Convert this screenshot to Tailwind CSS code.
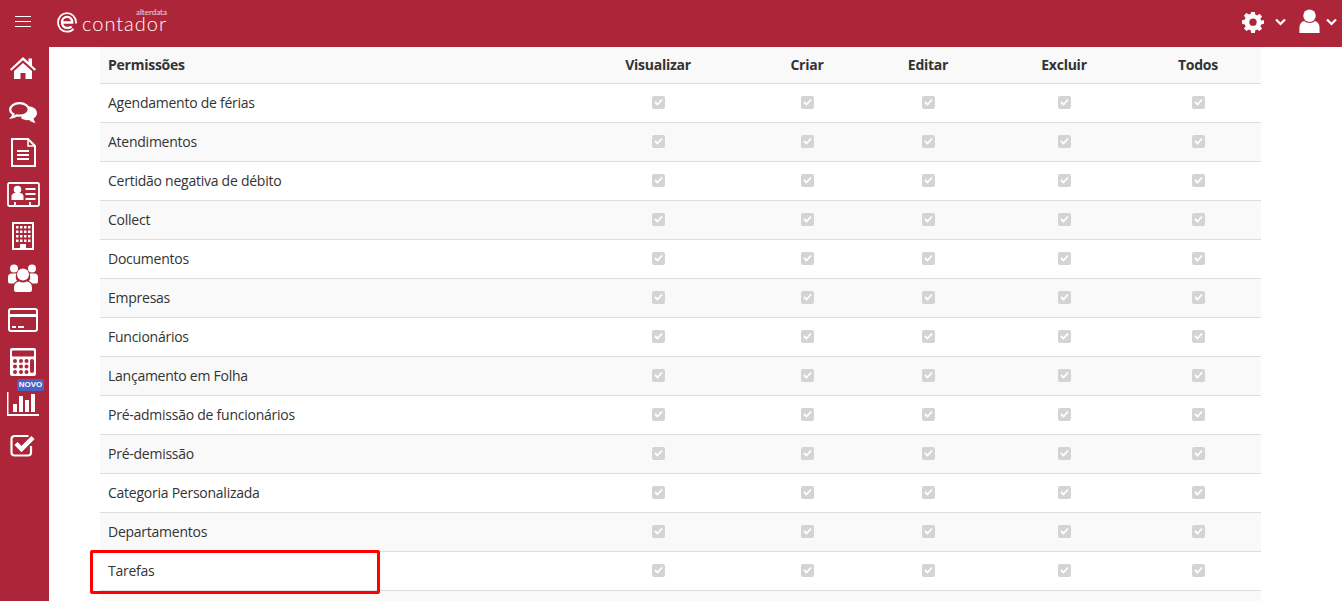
<!DOCTYPE html>
<html lang="en">
<head>
  <meta charset="UTF-8" />
  <script src="https://cdn.jsdelivr.net/npm/@tailwindcss/browser@4"></script>
  <title>eContador</title>
</head>
<body class="h-[601px] overflow-hidden bg-white font-['Open_Sans','Noto_Sans',sans-serif] text-[14px] text-[#333]">
  <!-- Top bar -->
  <header class="flex h-[47px] items-center bg-[#ac2539] text-white">
    <button class="ml-[15px] mb-[5px] flex w-[16px] flex-col gap-[4px]">
      <span class="h-px w-full bg-white"></span>
      <span class="h-px w-full bg-white"></span>
      <span class="h-px w-full bg-white"></span>
    </button>
    <div class="relative ml-[26px] mb-[9px] flex h-[30px] w-[110px] items-end">
      <svg class="mb-[1px]" width="20" height="21" viewBox="0 0 20 21" fill="none" stroke="white">
        <path stroke-width="2.4" d="M5 10.5h10.2c.2-3.2-2-5.6-5-5.6-3.100 0-5.200 2.400-5.200 5.400 0 3.200 2.200 5.600 5.400 5.600 1.800 0 3.200-.5 4.300-1.300" />
        <path stroke-width="1.800" d="M16.600 16.800C14.900 18.600 12.700 19.700 10 19.700 4.900 19.700 1 15.700 1 10.500S4.900 1.200 10 1.200c5 0 9 3.800 9 9.300v1" />
      </svg>
      <span class="absolute left-[25px] top-[12px] font-['Lato',sans-serif] text-[20px] leading-[14px] font-light tracking-[1px]">contador</span>
      <span class="absolute left-[79px] top-[5px] font-['Lato',sans-serif] text-[8px] leading-[6px] text-white/80">alterdata</span>
    </div>
    <div class="ml-auto mb-[4px] flex items-center">
      <svg width="22" height="22" viewBox="0 0 24 24" fill="white" fill-rule="evenodd">
        <path d="M10 1h4l.6 3.100 1.900.8 2.600-1.800 2.800 2.800-1.800 2.600.8 1.900L24 10v4l-3.100.6-.8 1.900 1.800 2.600-2.800 2.800-2.600-1.800-1.900.8L14 24h-4l-.6-3.100-1.900-.8-2.600 1.800-2.800-2.800 1.800-2.600-.8-1.900L0 14v-4l3.100-.6.800-1.900-1.800-2.600 2.800-2.800 2.600 1.800 1.900-.8zM12 8.200a4 4 0 1 0 0 8 4 4 0 0 0 0-8z" />
      </svg>
      <svg class="ml-[11px]" width="11" height="8" viewBox="0 0 11 8" fill="none" stroke="white" stroke-width="2.200"><path d="M1 1.500l4.500 4.500L10 1.500" /></svg>
      <svg class="ml-[13px] mb-[2px]" width="21" height="24" viewBox="0 0 21 25" fill="white">
        <circle cx="10.500" cy="7" r="6.500" />
        <path d="M5 12.500c1.500 1.500 3.500 2 5.500 2s4-.5 5.500-2c3 .8 5 3 5 7V25H0v-5.500c0-4 2-6.200 5-7z" />
      </svg>
      <svg class="ml-[6px] mr-[5px]" width="11" height="8" viewBox="0 0 11 8" fill="none" stroke="white" stroke-width="2.200"><path d="M1 1.500l4.500 4.500L10 1.500" /></svg>
    </div>
  </header>

  <div class="flex h-[554px]">
    <!-- Sidebar -->
    <aside class="relative flex w-[49px] shrink-0 flex-col bg-[#ac2539] pr-[3px] text-white">
      <div class="flex h-[41px] items-center justify-center">
        <svg width="26" height="22" viewBox="0 0 26 22" fill="white"><path d="M13 0l5.500 5V1.500H22v7l4 3.700-1.300 1.500L13 3.200 1.300 13.700 0 12.200zM4 14l9-8 9 8v8h-6.500v-6h-5v6H4z" /></svg>
      </div>
      <div class="flex h-[42px] items-center justify-center pt-[6px]">
        <svg width="28" height="21" viewBox="0 0 28 21"><path d="M17 4c6 0 11 2.500 11 7 0 2.500-1.500 4.500-3.500 5.500.3 1.500 1 3 2 4.500-2.500-.5-5-1.500-6.500-3-3 .5-6-.3-8-2z" fill="white" /><path d="M10.500 1.200C5 1.200 1.200 4 1.200 7.500c0 2 1.300 3.700 3.300 4.800-.3 1.200-.9 2.200-1.700 3.100 2-.3 3.600-1.100 4.800-2 1 .2 1.900.3 2.900.3 5.500 0 9.300-2.800 9.300-6.200s-3.800-6.300-9.300-6.300z" fill="#ac2539" stroke="white" stroke-width="2.200" /></svg>
      </div>
      <div class="flex h-[42px] items-center justify-center pt-[2px]">
        <svg width="25" height="29" viewBox="0 0 25 29" fill="none" stroke="white" stroke-width="2"><path d="M1 1h16l7 7v20H1z" /><path d="M17 1v7h7" stroke-width="1.500" /><path d="M6 13h12M6 17h12M6 21h12" stroke-width="2" /></svg>
      </div>
      <div class="flex h-[42px] items-center justify-center pt-[2px]">
        <svg width="33" height="25" viewBox="0 0 33 25" fill="none" stroke="white"><rect x="1" y="1" width="31" height="23" rx="1.500" stroke-width="1.800" /><path d="M8 20v4M23 20v4" stroke-width="1.800" /><circle cx="10.500" cy="7.500" r="3.800" fill="white" stroke="none" /><path d="M4.500 18v-3.500c0-2 1.500-3.500 3.500-3.500h5c2 0 3.500 1.500 3.500 3.500V18z" fill="white" stroke="none" /><path d="M18.500 7h10M18.500 12h10M18.500 17h10" stroke-width="2" /></svg>
      </div>
      <div class="flex h-[42px] items-center justify-center pt-[1px]">
        <svg width="22" height="28" viewBox="0 0 22 28" fill="white" fill-rule="evenodd"><path d="M0 0h22v28H0zM2 2v24h18V2zM8 22h6v4H8zM4 4h2.500v2.500H4zM8 4h2.500v2.500H8zM12 4h2.500v2.500H12zM16 4h2.500v2.500H16zM4 8.500h2.500V11H4zM8 8.500h2.500V11H8zM12 8.500h2.500V11H12zM16 8.500h2.500V11H16zM4 13h2.500v2.500H4zM8 13h2.500v2.500H8zM12 13h2.500v2.500H12zM16 13h2.500v2.500H16zM4 17.500h2.500V20H4zM8 17.500h2.500V20H8zM12 17.500h2.500V20H12zM16 17.500h2.500V20H16z" /></svg>
      </div>
      <div class="flex h-[42px] items-center justify-center pt-[1px]">
        <svg width="30" height="28" viewBox="0 0 30 28" fill="white"><circle cx="6" cy="4.500" r="4" /><circle cx="24" cy="4.500" r="4" /><path d="M0 17v-4c0-2 1.500-3.500 3.500-3.500h5a8 8 0 0 0 .5 7.500c-1 .5-2.500 1.500-3 2.500H1.500C.5 19.500 0 18.500 0 17zM30 17v-4c0-2-1.500-3.500-3.500-3.500h-5a8 8 0 0 1-.5 7.500c1 .5 2.500 1.500 3 2.500h4.500c1 0 1.500-1 1.500-2.500z" /><circle cx="15" cy="10.500" r="6" /><path d="M11 17.500c2.500 1.200 5.500 1.200 8 0 3 .5 5 2.500 5 6V26c0 1-1 2-2 2H8c-1 0-2-1-2-2v-2.500c0-3.500 2-5.500 5-6z" /></svg>
      </div>
      <div class="flex h-[42px] items-center justify-center pt-[2px]">
        <svg width="30" height="24" viewBox="0 0 30 24" fill="none" stroke="white"><rect x="1" y="1" width="28" height="22" rx="2" stroke-width="2" /><path d="M1 7.500h28" stroke-width="3" /><path d="M4 19h4M10 19h6" stroke-width="2" /></svg>
      </div>
      <div class="flex h-[42px] items-center justify-center pt-[2px]">
        <svg width="26" height="28" viewBox="0 0 26 28" fill="white" fill-rule="evenodd"><path d="M2 0h22a2 2 0 0 1 2 2v24a2 2 0 0 1-2 2H2a2 2 0 0 1-2-2V2a2 2 0 0 1 2-2zM3 2.500a1 1 0 0 0-1 1v4a1 1 0 0 0 1 1h20a1 1 0 0 0 1-1v-4a1 1 0 0 0-1-1zM5 11a2 2 0 1 0 0 4 2 2 0 0 0 0-4zM11 11a2 2 0 1 0 0 4 2 2 0 0 0 0-4zM16.500 11a2 2 0 1 0 0 4 2 2 0 0 0 0-4zM22 11a2 2 0 0 0-2 2v10a2 2 0 0 0 4 0V13a2 2 0 0 0-2-2zM5 16.500a2 2 0 1 0 0 4 2 2 0 0 0 0-4zM11 16.500a2 2 0 1 0 0 4 2 2 0 0 0 0-4zM16.500 16.500a2 2 0 1 0 0 4 2 2 0 0 0 0-4zM5 22a2 2 0 1 0 0 4 2 2 0 0 0 0-4zM11 22a2 2 0 1 0 0 4 2 2 0 0 0 0-4zM16.500 22a2 2 0 1 0 0 4 2 2 0 0 0 0-4z" /></svg>
      </div>
      <div class="flex h-[42px] items-center justify-center pt-[2px]">
        <svg width="32" height="24" viewBox="0 0 32 24" fill="white"><path d="M0 0h1.500v22H32v2H0z" /><path d="M6 12h4v8H6zM12 4h4v16h-4zM18 8h4v12h-4zM24 2h4v18h-4z" /></svg>
      </div>
      <div class="flex h-[42px] items-center justify-center">
        <svg width="26" height="23" viewBox="0 0 26 23" fill="none" stroke="white"><path d="M21 12v6.500a3 3 0 0 1-3 3H4.500a3 3 0 0 1-3-3V5a3 3 0 0 1 3-3h14" stroke-width="2.200" /><path d="M6 9.500l5.500 5.500L23 3.500" stroke-width="4.500" /></svg>
      </div>
      <span class="absolute left-[17px] top-[332px] flex h-[12px] w-[27px] items-center justify-center rounded-[2px] bg-[#4a62c4] font-['Liberation_Sans',sans-serif] text-[8px] font-bold text-white">NOVO</span>
    </aside>

    <!-- Permissions table -->
    <main class="flex-1 pl-[51px]">
      <div class="w-[1161px] text-[14px] tracking-[-0.25px]">
        <div class="grid h-[37px] grid-cols-[465px_186px_112px_130px_142px_126px] items-center border-b border-[#ddd] bg-[#f9f9f9] pb-[2px] font-bold">
          <div class="pl-[8px]">Permissões</div>
          <div class="text-center">Visualizar</div>
          <div class="text-center">Criar</div>
          <div class="text-center">Editar</div>
          <div class="text-center">Excluir</div>
          <div class="text-center">Todos</div>
        </div>
        <div id="rows"></div>
        <div class="h-[20px] bg-[#f9f9f9]"></div>
      </div>
    </main>
  </div>

  <!-- Highlight around the Tarefas row -->
  <div class="absolute left-[90px] top-[550px] h-[44px] w-[290px] rounded-[2px] border-[3px] border-[#f00]"></div>

  <template id="rowTpl">
    <div class="grid h-[39px] grid-cols-[465px_186px_112px_130px_142px_126px] items-center border-b border-[#ddd] pb-[2px] odd:bg-white even:bg-[#f9f9f9]">
      <div class="name pl-[8px]"></div>
      <div class="flex justify-center"><span class="box flex h-[13px] w-[13px] items-center justify-center rounded-[2px] bg-[#d4d4d4]"><svg width="9" height="8" viewBox="0 0 9 8" fill="none" stroke="white" stroke-width="1.800"><path d="M1 4l2.500 2.500L8 1.500" /></svg></span></div>
      <div class="flex justify-center"><span class="box flex h-[13px] w-[13px] items-center justify-center rounded-[2px] bg-[#d4d4d4]"><svg width="9" height="8" viewBox="0 0 9 8" fill="none" stroke="white" stroke-width="1.800"><path d="M1 4l2.500 2.500L8 1.500" /></svg></span></div>
      <div class="flex justify-center"><span class="box flex h-[13px] w-[13px] items-center justify-center rounded-[2px] bg-[#d4d4d4]"><svg width="9" height="8" viewBox="0 0 9 8" fill="none" stroke="white" stroke-width="1.800"><path d="M1 4l2.500 2.500L8 1.500" /></svg></span></div>
      <div class="flex justify-center"><span class="box flex h-[13px] w-[13px] items-center justify-center rounded-[2px] bg-[#d4d4d4]"><svg width="9" height="8" viewBox="0 0 9 8" fill="none" stroke="white" stroke-width="1.800"><path d="M1 4l2.500 2.500L8 1.500" /></svg></span></div>
      <div class="flex justify-center"><span class="box flex h-[13px] w-[13px] items-center justify-center rounded-[2px] bg-[#d4d4d4]"><svg width="9" height="8" viewBox="0 0 9 8" fill="none" stroke="white" stroke-width="1.800"><path d="M1 4l2.500 2.500L8 1.500" /></svg></span></div>
    </div>
  </template>

  <script>
    const permissoes = ['Agendamento de férias', 'Atendimentos', 'Certidão negativa de débito', 'Collect', 'Documentos', 'Empresas', 'Funcionários', 'Lançamento em Folha', 'Pré-admissão de funcionários', 'Pré-demissão', 'Categoria Personalizada', 'Departamentos', 'Tarefas'];
    const rows = document.getElementById('rows');
    const tpl = document.getElementById('rowTpl');
    permissoes.forEach(nome => {
      const row = tpl.content.cloneNode(true);
      row.querySelector('.name').textContent = nome;
      rows.appendChild(row);
    });
  </script>
</body>
</html>
